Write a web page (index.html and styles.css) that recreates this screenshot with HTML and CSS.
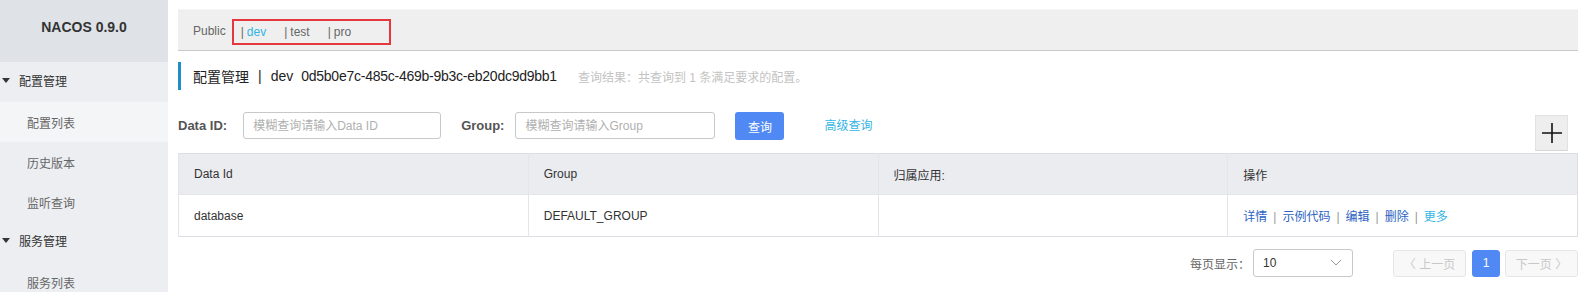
FILE: index.html
```html
<!DOCTYPE html>
<html lang="zh">
<head>
    <meta charset="UTF-8">
    <title>Nacos - 配置管理</title>
    <link rel="stylesheet" href="styles.css">
</head>
<body>
    <!-- Sidebar -->
    <div class="sidebar">
        <div class="logo">NACOS 0.9.0</div>
        <ul class="menu">
            <li class="menu-group"><span class="caret"></span>配置管理</li>
            <li class="menu-item active">配置列表</li>
            <li class="menu-item">历史版本</li>
            <li class="menu-item">监听查询</li>
            <li class="menu-group"><span class="caret"></span>服务管理</li>
            <li class="menu-item">服务列表</li>
        </ul>
    </div>

    <div class="main">
        <!-- Namespace bar -->
        <div class="ns-bar">
            <span class="ns-public">Public</span>
            <div class="ns-box">
                <span class="ns-item current"><i>|</i>dev</span>
                <span class="ns-item"><i>|</i>test</span>
                <span class="ns-item"><i>|</i>pro</span>
            </div>
        </div>

        <!-- Title -->
        <div class="page-title">
            <span class="title-main">配置管理</span>
            <span class="title-sep">|</span>
            <span class="title-ns">dev</span>
            <span class="title-id">0d5b0e7c-485c-469b-9b3c-eb20dc9d9bb1</span>
            <span class="title-hint">查询结果：共查询到 1 条满足要求的配置。</span>
        </div>

        <!-- Search -->
        <div class="search-row">
            <label class="search-label">Data ID:</label>
            <input class="search-input" type="text" placeholder="模糊查询请输入Data ID">
            <label class="search-label group-label">Group:</label>
            <input class="search-input wide" type="text" placeholder="模糊查询请输入Group">
            <button class="query-button">查询</button>
            <a class="adv-link">高级查询</a>
            <button class="add-button" title="新建配置">
                <svg width="22" height="22" viewBox="0 0 22 22"><path d="M11 1v20M1 11h20" stroke="#111" stroke-width="1.6" fill="none"/></svg>
            </button>
        </div>

        <!-- Table -->
        <table class="config-table">
            <thead>
                <tr>
                    <th>Data Id</th>
                    <th>Group</th>
                    <th>归属应用:</th>
                    <th>操作</th>
                </tr>
            </thead>
            <tbody>
                <tr>
                    <td>database</td>
                    <td>DEFAULT_GROUP</td>
                    <td></td>
                    <td class="actions">
                        <a>详情</a><span>|</span><a>示例代码</a><span>|</span><a>编辑</a><span>|</span><a>删除</a><span>|</span><a class="more">更多</a>
                    </td>
                </tr>
            </tbody>
        </table>

        <!-- Pagination -->
        <div class="pager">
            <span class="pager-label">每页显示：</span>
            <div class="page-size">
                <span>10</span>
                <svg width="12" height="8" viewBox="0 0 12 8"><path d="M1 1l5 5 5-5" stroke="#999" stroke-width="1" fill="none"/></svg>
            </div>
            <button class="page-btn disabled prev">〈 上一页</button>
            <button class="page-btn current">1</button>
            <button class="page-btn disabled next">下一页 〉</button>
        </div>
    </div>
</body>
</html>
```

FILE: styles.css
```css
html, body {
    overflow: hidden;
}
body {
    margin: 0;
    display: flex;
    height: 292px;
    font-family: "Liberation Sans", "Noto Sans CJK SC", sans-serif;
    font-size: 12px;
    color: #333;
    background-color: #fff;
}
.sidebar {
    width: 168px;
    flex-shrink: 0;
    background-color: #eceef2;
}
.logo {
    height: 62px;
    line-height: 54px;
    text-align: center;
    font-size: 14px;
    font-weight: bold;
    color: #333;
    background-color: #dfe2e7;
}
.menu {
    list-style: none;
    margin: 0;
    padding: 0;
}
.menu li {
    height: 40px;
    display: flex;
    align-items: center;
    font-size: 12px;
}
.menu-group {
    padding-left: 2px;
    padding-bottom: 3px;
    box-sizing: border-box;
    color: #333;
}
.caret {
    width: 0;
    height: 0;
    border-left: 4px solid transparent;
    border-right: 4px solid transparent;
    border-top: 5px solid #333;
    margin-right: 9px;
}
.menu-item {
    padding-left: 27px;
    color: #666;
}
.menu-item.active {
    background-color: #f4f5f7;
}
.main {
    width: 1400px;
    flex-shrink: 0;
    padding: 9px 0 0 10px;
}
.ns-bar {
    height: 40px;
    display: flex;
    align-items: center;
    padding-left: 15px;
    background-color: #efefef;
    border-top: 1px solid #f5f5f5;
    border-bottom: 1px solid #c8c8c8;
    width: 1385px;
    color: #666;
}
.ns-public {
    margin-right: 6px;
    margin-top: 2px;
}
.ns-box {
    display: flex;
    align-items: center;
    height: 22px;
    margin-top: 3px;
    padding: 0 38px 0 7px;
    border: 2px solid #e5383e;
}
.ns-item {
    margin-right: 18px;
    color: #666;
}
.ns-item:last-child {
    margin-right: 0;
}
.ns-item i {
    font-style: normal;
    margin-right: 3px;
    color: #666;
}
.ns-item.current {
    color: #34b3e3;
}
.page-title {
    margin-top: 11px;
    height: 28px;
    display: flex;
    align-items: center;
    border-left: 3px solid #1f8dc6;
    padding-left: 12px;
    font-size: 14px;
    color: #222;
}
.title-sep {
    margin: 0 9px;
}
.title-ns {
    margin-right: 8px;
}
.title-id {
    letter-spacing: -0.25px;
}
.title-hint {
    margin-left: 21px;
    font-size: 12px;
    color: #c3c3c3;
}
.search-row {
    margin-top: 22px;
    display: flex;
    align-items: flex-start;
    height: 38px;
}
.search-label {
    height: 28px;
    line-height: 28px;
    font-size: 13px;
    font-weight: bold;
    color: #555;
    margin-right: 16px;
}
.group-label {
    margin-left: 20px;
    margin-right: 11px;
}
.search-input {
    box-sizing: border-box;
    width: 198px;
    height: 27px;
    margin-top: 0;
    padding: 0 9px;
    border: 1px solid #c8c8c8;
    border-radius: 3px;
    font-family: inherit;
    font-size: 12px;
    color: #333;
}
.search-input.wide {
    width: 200px;
}
.search-input::placeholder {
    color: #b0b0b0;
}
.query-button {
    margin-left: 20px;
    width: 49px;
    height: 28px;
    border: none;
    border-radius: 3px;
    background-color: #5189f4;
    color: #fff;
    font-family: inherit;
    font-size: 12px;
}
.adv-link {
    margin-left: 40px;
    height: 28px;
    line-height: 28px;
    color: #33b5e5;
    font-size: 12px;
}
.add-button {
    margin-left: auto;
    margin-right: 10px;
    margin-top: 3px;
    width: 33px;
    height: 36px;
    padding: 0;
    display: flex;
    align-items: center;
    justify-content: center;
    background-color: #eeeeee;
    border: 1px solid #e2e2e2;
    border-bottom-color: #d5d5d5;
}
.config-table {
    margin-top: 3px;
    width: 1400px;
    border-collapse: collapse;
    table-layout: fixed;
    border: 1px solid #dcdee3;
}
.config-table th,
.config-table td {
    text-align: left;
    padding: 0 15px;
    font-weight: normal;
    font-size: 12px;
    border-left: 1px solid #e4e5e9;
}
.config-table th {
    height: 40px;
    background-color: #ebecf0;
    color: #333;
}
.config-table td {
    height: 41px;
    color: #333;
    border-top: 1px solid #e4e5e9;
}
.actions a {
    color: #2c63c2;
}
.actions span {
    margin: 0 6px;
    color: #999;
}
.actions a.more {
    color: #33b5e5;
}
.pager {
    margin-top: 12px;
    display: flex;
    justify-content: flex-end;
    align-items: center;
    height: 28px;
}
.pager-label {
    color: #666;
    margin-right: 3px;
}
.page-size {
    box-sizing: border-box;
    width: 100px;
    height: 28px;
    display: flex;
    align-items: center;
    justify-content: space-between;
    padding: 0 10px 0 9px;
    border: 1px solid #c8c8c8;
    border-radius: 3px;
    margin-right: 40px;
}
.page-btn {
    height: 27px;
    border: 1px solid #e6e6e6;
    border-radius: 3px;
    background-color: #f8f8f8;
    font-family: inherit;
    font-size: 12px;
    padding: 0;
}
.page-btn.disabled {
    color: #c8c8c8;
    width: 73px;
}
.page-btn.current {
    width: 28px;
    margin: 0 5px 0 6px;
    border-color: #5189f4;
    background-color: #5189f4;
    color: #fff;
}
```
